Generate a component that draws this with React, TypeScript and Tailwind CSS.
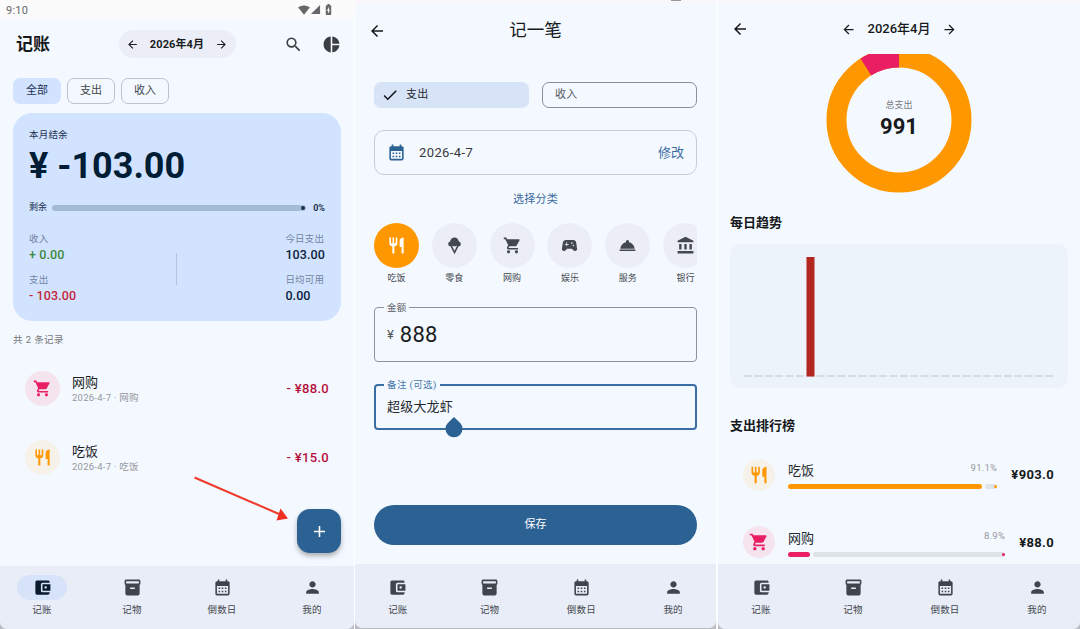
import type { ReactNode } from 'react';
import clsx from 'clsx';
import type { IconType } from 'react-icons';
import {
  MdAccountBalance,
  MdAccountBalanceWallet,
  MdAdd,
  MdArrowBack,
  MdArrowForward,
  MdBatteryChargingFull,
  MdCalendarMonth,
  MdCheck,
  MdIcecream,
  MdInventory2,
  MdPerson,
  MdPieChart,
  MdRestaurant,
  MdRoomService,
  MdSearch,
  MdShoppingCart,
  MdSignalCellular4Bar,
  MdSignalWifi4Bar,
  MdSportsEsports,
} from 'react-icons/md';

const NAV_ITEMS: { label: string; icon: IconType }[] = [
  { label: '记账', icon: MdAccountBalanceWallet },
  { label: '记物', icon: MdInventory2 },
  { label: '倒数日', icon: MdCalendarMonth },
  { label: '我的', icon: MdPerson },
];

const CATEGORIES: { label: string; icon: IconType }[] = [
  { label: '吃饭', icon: MdRestaurant },
  { label: '零食', icon: MdIcecream },
  { label: '网购', icon: MdShoppingCart },
  { label: '娱乐', icon: MdSportsEsports },
  { label: '服务', icon: MdRoomService },
  { label: '银行', icon: MdAccountBalance },
];

function BottomNav({ active, className }: { active?: number; className?: string }) {
  return (
    <div className="mt-auto shrink-0 bg-[#b9bcc2]">
      <nav className={clsx('bg-[#e9edf7]', className)}>
        <div className="-mx-[3px] grid grid-cols-4">
          {NAV_ITEMS.map(({ label, icon: Icon }, i) => (
            <div key={label} className="flex flex-col items-center">
              <div
                className={clsx(
                  'flex h-[25px] w-[50px] items-center justify-center rounded-full',
                  i === active ? 'bg-[#d6e3f9] text-[#0b1b2e]' : 'text-[#40444d]'
                )}
              >
                <Icon size={19} />
              </div>
              <span className="mt-[3px] text-[9.5px] leading-[14px] tracking-[0.2px] text-[#43474e]">{label}</span>
            </div>
          ))}
        </div>
      </nav>
    </div>
  );
}

function Chip({ children, selected }: { children: ReactNode; selected?: boolean }) {
  return (
    <div
      className={clsx(
        'flex h-[26px] w-12 items-center justify-center rounded-[7px] text-[11px]',
        selected ? 'bg-[#d2e3ff] text-[#1c3250]' : 'border border-[#bfc3ca] text-[#43474e]'
      )}
    >
      {children}
    </div>
  );
}

function Stat({ label, value, color }: { label: string; value: string; color: string }) {
  return (
    <div className="flex h-[41px] flex-col">
      <span className="text-[9.5px] leading-[14px] tracking-[0.2px] text-[#72839f]">{label}</span>
      <span className={clsx('mt-px text-[12.5px] font-medium leading-4 tracking-[0.1px]', color)}>{value}</span>
    </div>
  );
}

function Record({ icon: Icon, name, amount, tint }: { icon: IconType; name: string; amount: string; tint: string }) {
  return (
    <div className="flex h-[69px] items-center pl-[25px] pr-[25px]">
      <div className={clsx('flex size-[35px] items-center justify-center rounded-full pr-px', tint)}>
        <Icon size={19} />
      </div>
      <div className="ml-3 flex-1 pt-0.5">
        <div className="text-[13px] leading-[17px] text-[#1a1c1e]">{name}</div>
        <div className="text-[9.5px] leading-[14px] tracking-[0.25px] text-[#94979c]">2026-4-7 · {name}</div>
      </div>
      <span className="pt-px text-[13px] font-medium tracking-[0.3px] text-[#b50f3c]">{amount}</span>
    </div>
  );
}

function HomeScreen() {
  return (
    <section className="relative flex w-[354px] shrink-0 flex-col overflow-hidden bg-[#f4f9ff]">
      <div className="flex h-[19px] items-center justify-between bg-[#fbfbfb] pl-1.5 pr-[19px] text-[#66686b]">
        <span className="pt-[3px] text-[11px] leading-4 tracking-[0.2px]">9:10</span>
        <div className="flex items-center">
          <MdSignalWifi4Bar size={12} />
          <MdSignalCellular4Bar size={11} />
          <MdBatteryChargingFull size={13} className="ml-px" />
        </div>
      </div>

      <header className="flex h-[50px] items-center pl-4 pr-[13px]">
        <h1 className="w-[103px] pt-0.5 text-[17px] font-bold text-[#17191c]">记账</h1>
        <div className="flex h-7 w-[117px] items-center justify-between rounded-full bg-[#ebeef7] pl-[7px] pr-2 text-[#1a1c1e]">
          <MdArrowBack size={13} />
          <span className="pt-0.5 text-[11px] font-bold tracking-[0.1px]">2026年4月</span>
          <MdArrowForward size={13} />
        </div>
        <MdSearch size={19} className="ml-auto text-[#3b3e43]" />
        <MdPieChart size={19} className="ml-[19px] text-[#3b3e43]" />
      </header>

      <div className="mt-[9px] flex gap-1.5 pl-[13px]">
        <Chip selected>全部</Chip>
        <Chip>支出</Chip>
        <Chip>收入</Chip>
      </div>

      <div className="ml-[13px] mt-[9px] h-[208px] w-[328px] rounded-[19px] bg-[#d2e3ff] px-4 pt-[14px] text-[#001d36]">
        <div className="text-[9.5px] leading-[15px] tracking-[0.2px] text-[#1c3250]">本月结余</div>
        <div className="pt-0.5 text-[36px] font-bold leading-[44px]">¥ -103.00</div>
        <div className="mt-3 flex h-[15px] items-center text-[9px] text-[#1c3250]">
          <span className="shrink-0 pt-px">剩余</span>
          <div className="ml-[5px] flex h-1.5 w-[254px] items-center justify-end rounded-full bg-[#a5bad5] pr-px">
            <div className="size-1 rounded-full bg-[#1c3250]" />
          </div>
          <span className="ml-auto pt-0.5 font-bold">0%</span>
        </div>
        <div className="mt-[17px] grid grid-cols-[147px_1px_1fr] items-center">
          <div>
            <Stat label="收入" value="+ 0.00" color="text-[#3c8a40]" />
            <Stat label="支出" value="- 103.00" color="text-[#c5283a]" />
          </div>
          <div className="mb-5 mt-3 h-8 w-px bg-[#b0c3e2]" />
          <div className="justify-self-end">
            <Stat label="今日支出" value="103.00" color="text-[#0b2240]" />
            <Stat label="日均可用" value="0.00" color="text-[#0b2240]" />
          </div>
        </div>
      </div>

      <div className="ml-[13px] mt-3 text-[9.5px] leading-[14px] tracking-[0.4px] text-[#74777c]">共 2 条记录</div>
      <div className="mt-[7px]">
        <Record icon={MdShoppingCart} name="网购" amount="- ¥88.0" tint="bg-[#f5e3ee] text-[#e91e63]" />
        <Record icon={MdRestaurant} name="吃饭" amount="- ¥15.0" tint="bg-[#f6f1e9] text-[#ff9800]" />
      </div>

      <svg className="absolute left-[190px] top-[472px]" width="104" height="56" fill="none">
        <path d="M4.500 5.500 L89 42" stroke="#ef3a2c" strokeWidth="2" />
        <path d="M98 46.500 L90.500 36.500 L86.500 48.500 Z" fill="#ef2f22" />
      </svg>
      <button className="absolute left-[297px] top-[509px] flex size-[44px] items-center justify-center rounded-[13px] bg-[#2c6193] text-white shadow-[0_3px_5px_rgba(0,0,0,0.3)]">
        <MdAdd size={19} />
      </button>

      <BottomNav active={0} className="h-[63px] rounded-b-[7px] pt-[9px]" />
    </section>
  );
}

function AddRecordScreen() {
  return (
    <section className="ml-px flex w-[361px] shrink-0 flex-col overflow-hidden bg-[#f4f9ff]">
      <div className="flex h-[5px] justify-end bg-[linear-gradient(#fcf4f9,#f4f9ff)] pr-[35px]">
        <div className="h-px w-[10px] bg-[#9b979c]" />
      </div>
      <header className="grid h-[51px] grid-cols-[48px_1fr_48px] items-center text-[#17191c]">
        <MdArrowBack size={18} className="ml-[13px]" />
        <h1 className="text-center text-[17.500px]">记一笔</h1>
      </header>

      <div className="mt-[26px] grid grid-cols-2 gap-[13px] px-[19px] text-[11px] tracking-[0.2px]">
        <div className="flex h-[26px] items-center rounded-[7px] bg-[#d7e4f8] pl-[7px] text-[#24282e]">
          <MdCheck size={18} className="mr-[7px] text-[#111418]" />
          支出
        </div>
        <div className="flex h-[26px] items-center rounded-[7px] border border-[#8a8f98] pl-3 text-[#53575e]">收入</div>
      </div>

      <div className="mx-[19px] mt-[22px] flex h-[45px] items-center rounded-[10px] border border-[#c8cdd4] px-3 text-[13px]">
        <MdCalendarMonth size={19} className="text-[#2c6193]" />
        <span className="ml-[13px] flex-1 tracking-[0.4px] text-[#35393e]">2026-4-7</span>
        <span className="text-[#3c6b9f]">修改</span>
      </div>

      <div className="mt-4 text-center text-[11px] leading-[17px] tracking-[0.2px] text-[#3c6b9f]">选择分类</div>

      <div className="ml-[19px] mr-[19px] mt-[15px] flex gap-[12.8px] overflow-hidden">
        {CATEGORIES.map(({ label, icon: Icon }, i) => (
          <div key={label} className="flex w-[45px] shrink-0 flex-col items-center">
            <div
              className={clsx(
                'flex size-[45px] items-center justify-center rounded-full',
                i === 0 ? 'bg-[#ff9800] text-white' : 'bg-[#ebeef7] text-[#43474e]'
              )}
            >
              <Icon size={19} />
            </div>
            <span className="mt-1 text-[9px] leading-[13px] text-[#43474e]">{label}</span>
          </div>
        ))}
      </div>

      <div className="relative mx-[19px] mt-[22px] flex h-[55px] items-center rounded-[4px] border border-[#8e929b] pl-3">
        <span className="absolute left-[9px] top-[-8px] bg-[#f4f9ff] px-[3px] text-[9.5px] leading-[15px] tracking-[0.2px] text-[#5a5e66]">
          金额
        </span>
        <span className="text-[13px] text-[#53575e]">¥</span>
        <span className="ml-[6px] text-[22px] tracking-[0.2px] text-[#1a1c1e]">888</span>
      </div>

      <div className="relative mx-[19px] mt-[22px] h-[46px] rounded-[4px] border-2 border-[#3b6fa3] pl-[11px] pt-3">
        <span className="absolute left-2 top-[-9px] bg-[#f4f9ff] px-[3px] text-[9.5px] leading-[15px] tracking-[0.4px] text-[#4576aa]">
          备注 (可选)
        </span>
        <div className="text-[13px] leading-[18px] tracking-[0.2px] text-[#24282e]">超级大龙虾</div>
        <svg className="absolute left-[69px] top-[31px]" width="18" height="21" viewBox="0 0 18 21">
          <path d="M9 0 L15.200 6 A8.500 8.500 0 1 1 2.800 6 Z" fill="#2c6193" />
        </svg>
      </div>

      <button className="mx-[19px] mt-[75px] h-10 rounded-full bg-[#2c6193] text-[11px] text-white">保存</button>

      <BottomNav className="mb-px h-[64px] rounded-b-[7px] pt-[11px]" />
    </section>
  );
}

function SpendingRing() {
  return (
    <div className="relative mx-auto h-[139px] w-[146px] shrink-0 overflow-hidden">
      <svg className="absolute left-0 top-[-7px]" width="146" height="146" viewBox="-73 -73 146 146" fill="none">
        <circle r="62.500" stroke="#ff9800" strokeWidth="20" />
        <circle
          r="62.500"
          stroke="#e91e63"
          strokeWidth="20"
          pathLength="100"
          strokeDasharray="8.900 91.100"
          strokeDashoffset="-91.100"
          transform="rotate(-90)"
        />
      </svg>
      <div className="absolute inset-x-0 top-[44px] text-center">
        <div className="text-[9px] leading-[14px] text-[#777b80]">总支出</div>
        <div className="mt-px text-[22px] font-bold leading-7 text-[#17191c]">991</div>
      </div>
    </div>
  );
}

interface RankRowProps {
  icon: IconType;
  name: string;
  percent: number;
  amount: string;
  tint: string;
  bar: string;
  fill: number;
}

function RankRow({ icon: Icon, name, percent, amount, tint, bar, fill }: RankRowProps) {
  return (
    <div className="flex h-[67.500px] items-center pl-[25px] pr-[26px]">
      <div className={clsx('flex size-8 items-center justify-center rounded-full', tint)}>
        <Icon size={20} />
      </div>
      <div className="ml-[13px] flex-1">
        <div className="flex h-[18px] justify-between">
          <span className="pt-0.5 text-[13px] leading-[18px] text-[#24282e]">{name}</span>
          <span className="pt-px text-[9.5px] leading-[13px] tracking-[0.25px] text-[#94979c]">{percent}%</span>
        </div>
        <div className="mt-1.5 flex h-[5px] gap-[3px]">
          <div className={clsx('shrink-0 rounded-full', bar)} style={{ width: fill }} />
          <div className="flex flex-1 items-center justify-end rounded-full bg-[#dfe3e8]">
            <div className={clsx('size-[3px] rounded-full', bar)} />
          </div>
        </div>
      </div>
      <span className="ml-[14px] text-[13px] font-bold tracking-[0.35px] text-[#17191c]">{amount}</span>
    </div>
  );
}

function StatsScreen() {
  return (
    <section className="ml-0.5 flex w-[362px] shrink-0 flex-col overflow-hidden bg-[#f4f9ff]">
      <div className="h-1 shrink-0 bg-[linear-gradient(#fcf4f9,#f4f9ff)]" />
      <header className="grid h-[50px] shrink-0 grid-cols-[48px_1fr_48px] items-center text-[#17191c]">
        <MdArrowBack size={18} className="ml-[13px]" />
        <div className="flex items-center justify-center gap-3">
          <MdArrowBack size={15} />
          <span className="text-[13px] font-medium">2026年4月</span>
          <MdArrowForward size={15} />
        </div>
      </header>

      <SpendingRing />

      <h2 className="ml-3 mt-[21px] text-[13px] font-bold leading-[18px] text-[#17191c]">每日趋势</h2>
      <div className="mx-3 mt-3 h-[144px] shrink-0 rounded-[10px] bg-[#edf3fa] px-[13px]">
        <svg width="310" height="144" viewBox="0 0 310 144">
          <path d="M1 132 H310" stroke="#d0d4da" strokeWidth="1.500" strokeDasharray="7.700 2.700" />
          <rect x="63.500" y="13" width="8" height="119.500" fill="#b3261e" />
        </svg>
      </div>

      <h2 className="ml-3 mt-[29px] text-[13px] font-bold leading-[18px] text-[#17191c]">支出排行榜</h2>
      <div className="mt-1.5 h-[123px] shrink-0 overflow-hidden">
        <RankRow
          icon={MdRestaurant}
          name="吃饭"
          percent={91.1}
          amount="¥903.0"
          tint="bg-[#f6f1e9] text-[#ff9800]"
          bar="bg-[#ff9800]"
          fill={194}
        />
        <RankRow
          icon={MdShoppingCart}
          name="网购"
          percent={8.9}
          amount="¥88.0"
          tint="bg-[#f5e3ee] text-[#e91e63]"
          bar="bg-[#e91e63]"
          fill={22}
        />
      </div>

      <BottomNav className="h-[65px] rounded-b-[7px] pt-[11px]" />
    </section>
  );
}

export default function App() {
  return (
    <main className="flex h-[629px] w-[1080px] overflow-hidden bg-[#fcfdff] font-['Roboto','Noto_Sans_CJK_SC',sans-serif]">
      <HomeScreen />
      <AddRecordScreen />
      <StatsScreen />
    </main>
  );
}
